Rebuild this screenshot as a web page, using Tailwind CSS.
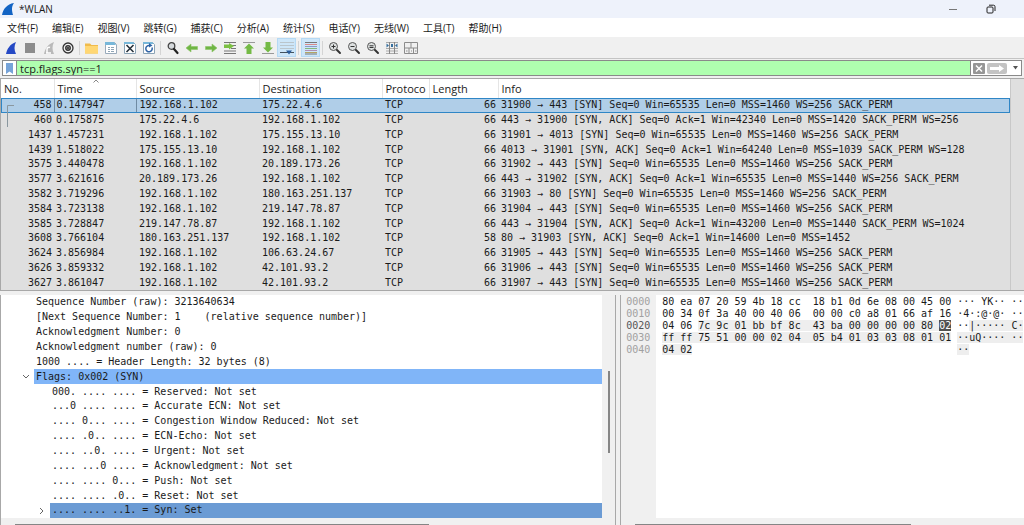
<!DOCTYPE html>
<html lang="zh-CN">
<head>
    <meta charset="UTF-8">
    <meta name="viewport" content="width=device-width, initial-scale=1.0">
    <title>*WLAN</title>
    <script src="https://cdn.jsdelivr.net/npm/@tailwindcss/browser@4"></script>
</head>
<body class="h-screen min-h-[400px] flex flex-col overflow-hidden bg-[#f0f0f0] text-[#1a1a1a] font-['Open_Sans','Noto_Sans_CJK_SC',sans-serif]">

    <!-- Title bar -->
    <header class="flex items-center h-[18px] shrink-0 bg-[#eef2fb] pl-[2px] pr-[28px]">
        <svg class="w-3 h-3" viewBox="0 0 12 12"><path d="M0 12C1 6 5 1 12 0C9 4 10 8 11 12Z" fill="#1364c4"/></svg>
        <h1 class="ml-[5px] text-[10px] leading-3">*WLAN</h1>
        <div class="ml-auto flex items-center gap-7">
            <button aria-label="Minimize" class="block"><svg class="w-[10px] h-[10px]" viewBox="0 0 10 10"><path d="M1 5.5h8" stroke="#777"/></svg></button>
            <button aria-label="Restore" class="block"><svg class="w-[10px] h-[10px]" viewBox="0 0 10 10" fill="none" stroke="#222"><rect x="1" y="3" width="6" height="6" rx="1"/><path d="M3 1.2h4.5a1.5 1.5 0 0 1 1.5 1.5V7"/></svg></button>
        </div>
    </header>

    <!-- Menu -->
    <nav class="flex items-center gap-[14px] h-[19px] shrink-0 bg-white pl-[7px] text-[10px] leading-3 whitespace-nowrap">
        <a href="#">文件(F)</a>
        <a href="#">编辑(E)</a>
        <a href="#">视图(V)</a>
        <a href="#">跳转(G)</a>
        <a href="#">捕获(C)</a>
        <a href="#">分析(A)</a>
        <a href="#">统计(S)</a>
        <a href="#">电话(Y)</a>
        <a href="#">无线(W)</a>
        <a href="#">工具(T)</a>
        <a href="#">帮助(H)</a>
    </nav>

    <!-- Toolbar -->
    <div id="toolbar" class="flex items-center h-[22px] shrink-0 pl-px border-b border-[#c4c4c4]">
        <button aria-label="Start capture"><svg viewBox="0 0 14 14"><path d="M2 13C3 8 6 3 12 1C10 5 10 9 12 13Z" fill="#2549c4"/></svg></button>
        <button aria-label="Stop capture"><svg viewBox="0 0 14 14"><path d="M2 2h10v10H2z" fill="#8c8c8c"/></svg></button>
        <button aria-label="Restart capture"><svg viewBox="0 0 14 14"><path d="M2 13C3 8 6 3 12 1C10 5 10 9 12 13Z" fill="#b9b9b9"/><path d="M5 12V8.500a2 2 0 0 1 3-2M4 12h5" stroke="#fff" stroke-width="1.500" fill="none"/></svg></button>
        <button aria-label="Capture options"><svg viewBox="0 0 14 14" fill="none" stroke="#333"><circle cx="7" cy="7" r="5" stroke-width="1.300"/><circle cx="7" cy="7" r="2.200" stroke-width="1.500"/><circle cx="7" cy="7" r=".8" fill="#333"/></svg></button>
        <i></i>
        <button aria-label="Open"><svg viewBox="0 0 14 14"><path d="M0 2.500h5l1.500 1.500H13v8.500H0z" fill="#f0bb4c"/><path d="M0 5h13v7.500H0z" fill="#ffd773"/></svg></button>
        <button aria-label="Save"><svg viewBox="0 0 14 14"><path d="M1.500 1.500h9l2 2v9h-11z" fill="#fff" stroke="#9ab"/><path d="M1 1h9l2 3H1z" fill="#77b7d9"/><path d="M4 6.500h2M7 6.500h3M4 8.500h2M7 8.500h3M4 10.500h2M7 10.500h3" stroke="#8fa5b5"/></svg></button>
        <button aria-label="Close file"><svg viewBox="0 0 14 14"><path d="M1.500 1.500h9l2 2v9h-11z" fill="#fff" stroke="#8ba3b5"/><path d="M1 1h9l2 2H1z" fill="#77b7d9"/><path d="M3.500 4l7 7M10.500 4l-7 7" stroke="#26313b" stroke-width="1.600"/></svg></button>
        <button aria-label="Reload"><svg viewBox="0 0 14 14"><path d="M1.500 1.500h9l2 2v9h-11z" fill="#fff" stroke="#8ba3b5"/><path d="M1 1h9l2 2H1z" fill="#77b7d9"/><path d="M10 6.500a3.200 3.200 0 1 1-2.500-2" stroke="#2f63a5" stroke-width="1.500" fill="none"/><path d="M7 2l3.500 2.500L7 6.500z" fill="#2f63a5"/></svg></button>
        <i></i>
        <button aria-label="Find"><svg viewBox="0 0 14 14"><circle cx="5.500" cy="5" r="3.300" fill="#d6dadd" stroke="#444" stroke-width="1.300"/><path d="M8 8l3.500 4" stroke="#222" stroke-width="2.200" stroke-linecap="round"/></svg></button>
        <button aria-label="Back"><svg viewBox="0 0 14 14"><path d="M1 7l5-4v2.500h6.500v3H6V11z" fill="#6fb544" stroke="#8cc466" stroke-width=".6"/></svg></button>
        <button aria-label="Forward"><svg viewBox="0 0 14 14"><path d="M13 7L8 3v2.500H1.500v3H8V11z" fill="#6fb544" stroke="#8cc466" stroke-width=".6"/></svg></button>
        <button aria-label="Go to packet"><svg viewBox="0 0 14 14"><path d="M1 1.500h12M8 4.500h5M8 7.500h5M1 10h12M1 12.500h12" stroke="#777"/><path d="M11 5L6 2v1.500H1v3.500h5V8.500z" fill="#7cc043"/></svg></button>
        <button aria-label="First packet"><svg viewBox="0 0 14 14"><path d="M1 1.500h12" stroke="#999"/><path d="M7 2.500l5 5H9.500v5.500h-5V7.500H2z" fill="#74ba45"/></svg></button>
        <button aria-label="Last packet"><svg viewBox="0 0 14 14"><path d="M1 12.500h12" stroke="#999"/><path d="M7 11.500l5-5H9.500V1h-5v5.500H2z" fill="#74ba45"/></svg></button>
        <button aria-label="Auto scroll" class="bg-[#cde6f9] outline outline-[#b5d9f4]"><svg viewBox="0 0 14 14"><path d="M0 1.500h14M0 4.500h14M0 7.500h14" stroke="#bac5cc"/><path d="M0 11.500h14" stroke="#43515d"/><path d="M6 9.500h6L9 13.500z" fill="#2a5d9b"/></svg></button>
        <i></i>
        <button aria-label="Colorize" class="bg-[#cde6f9] outline outline-[#b5d9f4]"><svg viewBox="0 0 14 14"><path d="M1 1.500h12" stroke="#777"/><path d="M1 3.500h12" stroke="#d98a8a"/><path d="M1 5.500h12" stroke="#8d9bc8"/><path d="M1 7.500h12" stroke="#86b57e"/><path d="M1 9.500h12" stroke="#b08fb5"/><path d="M1 11.500h12" stroke="#b5a562"/><path d="M1 13h12" stroke="#777"/></svg></button>
        <i></i>
        <button aria-label="Zoom in"><svg viewBox="0 0 14 14"><circle cx="5.500" cy="5.500" r="4" fill="#dde0e0" stroke="#555"/><path d="M3.500 5.500h4M5.500 3.500v4" stroke="#333"/><path d="M9 9l3 3" stroke="#333" stroke-width="2" stroke-linecap="round"/></svg></button>
        <button aria-label="Zoom out"><svg viewBox="0 0 14 14"><circle cx="5.500" cy="5.500" r="4" fill="#dde0e0" stroke="#555"/><path d="M3.500 5.500h4" stroke="#333"/><path d="M9 9l3 3" stroke="#333" stroke-width="2" stroke-linecap="round"/></svg></button>
        <button aria-label="Normal size"><svg viewBox="0 0 14 14"><circle cx="5.500" cy="5.500" r="4" fill="#dde0e0" stroke="#555"/><path d="M3.500 4.800h4M3.500 6.500h4" stroke="#333"/><path d="M9 9l3 3" stroke="#333" stroke-width="2" stroke-linecap="round"/></svg></button>
        <button aria-label="Resize columns"><svg viewBox="0 0 14 14"><path d="M1 1.500h12M1 7.500h12M1 10h12M1 12.500h12" stroke="#aaa"/><path d="M4.500 1v12M9.500 1v12" stroke="#888"/><path d="M1.500 2.500l2.500 2-2.500 2zM12.500 2.500l-2.500 2 2.500 2zM6 3h2v3H6z" fill="#37709f"/></svg></button>
        <button aria-label="Layout"><svg viewBox="0 0 14 14" fill="none" stroke="#8c8c8c"><path d="M.5 1.500h13v11H.5zM.5 7h13M7 1.500v5.500M5 7v5.500M9.500 7v5.500M2 10h1.500M7 10h1M11 10h1.500"/></svg></button>
    </div>

    <!-- Display filter -->
    <form class="flex items-center h-4 mx-[2px] mt-px shrink-0 bg-white border border-[#8a8a8a]">
        <button type="button" aria-label="Bookmarks" class="flex items-center justify-center w-[13px] h-full"><svg class="w-[7px] h-[11px]" viewBox="0 0 7 11"><path d="M0 0h7v11L3.500 8.500L0 11z" fill="#76a3d8"/></svg></button>
        <input aria-label="Display filter" value="tcp.flags.syn==1" class="flex-1 min-w-0 h-full px-[3px] bg-[#afffaf] border-x border-[#8a8a8a] text-[11px] leading-3 outline-none">
        <button type="button" aria-label="Clear" class="ml-[2px]"><svg class="w-3 h-[11px]" viewBox="0 0 12 11"><rect width="12" height="11" rx="1" fill="#969696"/><path d="M3 2.500l6 6M9 2.500l-6 6" stroke="#fff" stroke-width="1.500"/></svg></button>
        <button type="button" aria-label="Apply" class="ml-[2px]"><svg class="w-5 h-[11px]" viewBox="0 0 20 11"><rect width="20" height="11" rx="2" fill="#c3c3c3"/><path d="M3 4h9V2l5 3.500L12 9V7H3z" fill="#fff"/></svg></button>
        <button type="button" aria-label="Filter history" class="ml-[6px] mr-[3px]"><svg class="w-[5px] h-[4px]" viewBox="0 0 5 4"><path d="M0 0h5L2.500 3.500z" fill="#555"/></svg></button>
    </form>

    <!-- Packet list -->
    <main class="flex mt-[2px] shrink-0 border-y border-[#a8a8a8] border-l">
        <div class="relative flex-1 min-w-0 overflow-hidden">
            <table class="w-full h-[211px] table-fixed border-collapse whitespace-nowrap bg-[#dfdfdf]">
                <colgroup>
                    <col class="w-[53px]"><col class="w-[82px]"><col class="w-[123px]"><col class="w-[123px]"><col class="w-[47px]"><col class="w-[69px]"><col>
                </colgroup>
                <thead class="bg-white text-[11px] leading-4 text-left">
                    <tr class="h-[19px]">
                        <th class="p-0 pl-[3px] font-normal border-r border-[#e5e5e5]">No.</th>
                        <th class="p-0 pl-[3px] font-normal border-r border-[#e5e5e5]">Time</th>
                        <th class="p-0 pl-[3px] font-normal border-r border-[#e5e5e5]">Source</th>
                        <th class="p-0 pl-[3px] font-normal border-r border-[#e5e5e5]">Destination</th>
                        <th class="p-0 pl-[3px] font-normal border-r border-[#e5e5e5]">Protoco</th>
                        <th class="p-0 pl-[3px] font-normal border-r border-[#e5e5e5]">Length</th>
                        <th class="p-0 pl-[3px] font-normal">Info</th>
                    </tr>
                </thead>
                <tbody id="packets" class="font-['DejaVu_Sans_Mono',monospace] text-[10px] leading-3"></tbody>
            </table>
            <!-- sort marker and conversation bracket -->
            <svg class="absolute left-[92px] top-0 w-[6px] h-[4px]" viewBox="0 0 6 4"><path d="M.5 3.500L3 1l2.500 2.500" stroke="#888" fill="none"/></svg>
            <svg class="absolute left-[6px] top-[26px] w-[7px] h-[22px]" viewBox="0 0 7 22"><path d="M7 .5H.5V22" stroke="#8a979f" fill="none"/></svg>
        </div>
        <div class="w-[14px] bg-[#dfdfdf] border-l border-[#c8c8c8]"></div>
    </main>

    <!-- Details and bytes -->
    <div class="flex flex-1 min-h-0 mt-[4px] font-['DejaVu_Sans_Mono',monospace] text-[10px] leading-3">
        <section class="flex-[616] min-w-0 flex flex-col border-x border-[#a8a8a8]">
            <div class="flex flex-1 min-h-0">
                <ul id="details" class="flex-1 min-w-0 flex flex-col bg-white whitespace-pre"></ul>
                <div class="w-[13px] pl-[6px] pt-[76px]"><div class="w-[2px] h-[82px] bg-[#858585]"></div></div>
            </div>
            <div class="h-[7px] pt-[6px] pl-[14px]"><div class="h-px w-[69%] bg-[#858585]"></div></div>
        </section>
        <section class="flex-[404] min-w-0 ml-[4px] flex flex-col border-l border-[#a8a8a8]">
            <div class="flex flex-1 min-h-0 pl-px overflow-hidden">
                <div class="w-[34px] shrink-0 pl-[4px] pt-px text-[#a0a0a0]">
                    <p>0000</p>
                    <p>0010</p>
                    <p class="text-[#555]">0020</p>
                    <p>0030</p>
                    <p>0040</p>
                </div>
                <div class="flex flex-1 min-w-0 bg-white pl-[6px] pt-px">
                    <div class="w-[295px] shrink-0">
                        <p class="whitespace-pre">80 ea 07 20 59 4b 18 cc  18 b1 0d 6e 08 00 45 00</p>
                        <p class="whitespace-pre">00 34 0f 3a 40 00 40 06  00 00 c0 a8 01 66 af 16</p>
                        <p class="whitespace-pre">04 06 <span class="bg-[#eeeeee]">7c 9c 01 bb bf 8c  43 ba 00 00 00 00 80 <mark class="bg-[#505050] text-white">02</mark></span></p>
                        <p class="whitespace-pre"><span class="bg-[#eeeeee]">ff ff 75 51 00 00 02 04  05 b4 01 03 03 08 01 01</span></p>
                        <p class="whitespace-pre"><span class="bg-[#eeeeee]">04 02</span></p>
                    </div>
                    <div class="flex-1 min-w-0 whitespace-nowrap">
                        <p>··· YK·· ··</p>
                        <p>·4·:@·@· ··</p>
                        <p>··<span class="bg-[#eeeeee]">|····· C·</span></p>
                        <p><span class="bg-[#eeeeee]">··uQ···· ··</span></p>
                        <p><span class="bg-[#eeeeee]">··</span></p>
                    </div>
                </div>
            </div>
            <div class="h-[7px] pt-[6px] pl-[14px]"><div class="h-px w-[71%] bg-[#858585]"></div></div>
        </section>
    </div>

    <script>
        // Toolbar sizing
        document.querySelectorAll('#toolbar > button').forEach((button) => {
            button.classList.add('flex', 'items-center', 'justify-center', 'w-[19px]', 'h-[19px]', 'shrink-0', '-outline-offset-1');
            button.firstElementChild.classList.add('w-[14px]', 'h-[14px]');
        });
        document.querySelectorAll('#toolbar > i').forEach((separator) => {
            separator.className = 'w-px h-[14px] mx-[2px] bg-[#d4d4d4] shrink-0';
        });

        // Packet list
        const packets = [
            [458, '0.147947', '192.168.1.102', '175.22.4.6', 66, '31900 → 443 [SYN] Seq=0 Win=65535 Len=0 MSS=1460 WS=256 SACK_PERM'],
            [460, '0.175875', '175.22.4.6', '192.168.1.102', 66, '443 → 31900 [SYN, ACK] Seq=0 Ack=1 Win=42340 Len=0 MSS=1420 SACK_PERM WS=256'],
            [1437, '1.457231', '192.168.1.102', '175.155.13.10', 66, '31901 → 4013 [SYN] Seq=0 Win=65535 Len=0 MSS=1460 WS=256 SACK_PERM'],
            [1439, '1.518022', '175.155.13.10', '192.168.1.102', 66, '4013 → 31901 [SYN, ACK] Seq=0 Ack=1 Win=64240 Len=0 MSS=1039 SACK_PERM WS=128'],
            [3575, '3.440478', '192.168.1.102', '20.189.173.26', 66, '31902 → 443 [SYN] Seq=0 Win=65535 Len=0 MSS=1460 WS=256 SACK_PERM'],
            [3577, '3.621616', '20.189.173.26', '192.168.1.102', 66, '443 → 31902 [SYN, ACK] Seq=0 Ack=1 Win=65535 Len=0 MSS=1440 WS=256 SACK_PERM'],
            [3582, '3.719296', '192.168.1.102', '180.163.251.137', 66, '31903 → 80 [SYN] Seq=0 Win=65535 Len=0 MSS=1460 WS=256 SACK_PERM'],
            [3584, '3.723138', '192.168.1.102', '219.147.78.87', 66, '31904 → 443 [SYN] Seq=0 Win=65535 Len=0 MSS=1460 WS=256 SACK_PERM'],
            [3585, '3.728847', '219.147.78.87', '192.168.1.102', 66, '443 → 31904 [SYN, ACK] Seq=0 Ack=1 Win=43200 Len=0 MSS=1440 SACK_PERM WS=1024'],
            [3608, '3.766104', '180.163.251.137', '192.168.1.102', 58, '80 → 31903 [SYN, ACK] Seq=0 Ack=1 Win=14600 Len=0 MSS=1452'],
            [3624, '3.856984', '192.168.1.102', '106.63.24.67', 66, '31905 → 443 [SYN] Seq=0 Win=65535 Len=0 MSS=1460 WS=256 SACK_PERM'],
            [3626, '3.859332', '192.168.1.102', '42.101.93.2', 66, '31906 → 443 [SYN] Seq=0 Win=65535 Len=0 MSS=1460 WS=256 SACK_PERM'],
            [3627, '3.861047', '192.168.1.102', '42.101.93.2', 66, '31907 → 443 [SYN] Seq=0 Win=65535 Len=0 MSS=1460 WS=256 SACK_PERM'],
        ];
        document.getElementById('packets').innerHTML = packets.map(([no, time, source, destination, length, info], i) => `
            <tr class="${i === 0 ? 'bg-[#b0cee8] outline outline-[#2f86c6] -outline-offset-1' : ''}">
                <td class="p-0 pr-[2px] text-right">${no}</td>
                <td class="p-0 pl-[2px] ${i === 0 ? 'border-x border-[#6f8ba3]' : ''}">${time}</td>
                <td class="p-0 pl-[3px]">${source}</td>
                <td class="p-0 pl-[3px]">${destination}</td>
                <td class="p-0 pl-[3px]">TCP</td>
                <td class="p-0 pr-[2px] text-right">${length}</td>
                <td class="p-0 pl-[3px]">${info}</td>
            </tr>`).join('');

        // Packet details: text, nested, arrow, background
        const details = [
            ['Sequence Number (raw): 3213640634'],
            ['[Next Sequence Number: 1    (relative sequence number)]'],
            ['Acknowledgment Number: 0'],
            ['Acknowledgment number (raw): 0'],
            ['1000 .... = Header Length: 32 bytes (8)'],
            ['Flags: 0x002 (SYN)', false, 'M1 2l3 3l3-3', 'bg-[#80b5f8]'],
            ['000. .... .... = Reserved: Not set', true],
            ['...0 .... .... = Accurate ECN: Not set', true],
            ['.... 0... .... = Congestion Window Reduced: Not set', true],
            ['.... .0.. .... = ECN-Echo: Not set', true],
            ['.... ..0. .... = Urgent: Not set', true],
            ['.... ...0 .... = Acknowledgment: Not set', true],
            ['.... .... 0... = Push: Not set', true],
            ['.... .... .0.. = Reset: Not set', true],
            ['.... .... ..1. = Syn: Set', true, 'M2 1l3 3l-3 3', 'bg-[#6b9bd4]'],
        ];
        document.getElementById('details').innerHTML = details.map(([text, nested, arrow, background]) => `
            <li class="flex flex-1 items-center ${nested ? 'pl-[37px]' : 'pl-[21px]'}">
                <svg class="w-[7px] h-[7px] mr-[5px] shrink-0" viewBox="0 0 7 7"><path d="${arrow || ''}" stroke="#666" fill="none"/></svg>
                <span class="flex flex-1 items-center h-full pl-[2px] ${background || ''}">${text}</span>
            </li>`).join('');
    </script>
</body>
</html>
